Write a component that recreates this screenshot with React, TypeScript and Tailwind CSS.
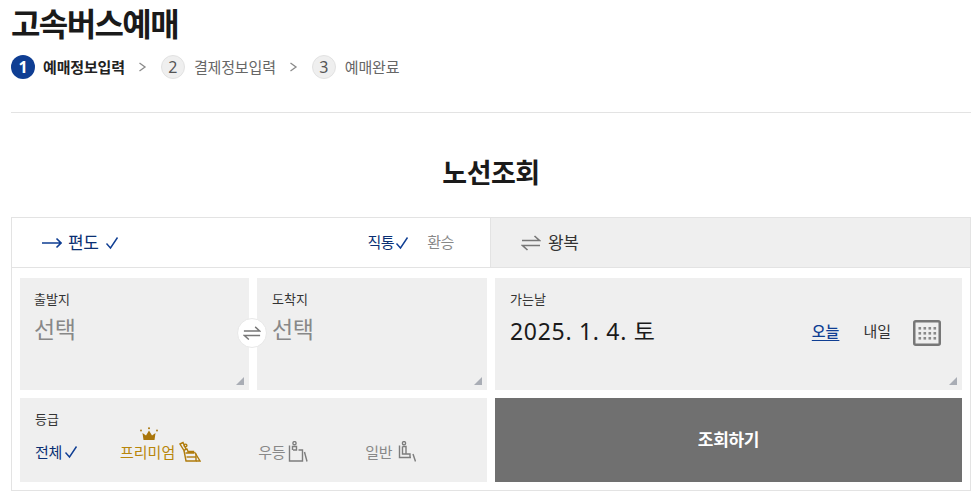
import React from "react";

const FONT = "font-['Noto_Sans','Noto_Sans_CJK_KR',sans-serif]";

function Corner() {
  return (
    <svg className="absolute bottom-[5px] right-[5px]" width="8" height="8" viewBox="0 0 8 8">
      <path d="M8 0V8H0Z" fill="#a9adb5" />
    </svg>
  );
}

function Check({ color = "#0f3e93", size = 14 }: { color?: string; size?: number }) {
  return (
    <svg width={size} height={size} viewBox="0 0 14 14" fill="none">
      <path d="M1.5 7.5L5.5 12L12.5 1.5" stroke={color} strokeWidth="1.4" />
    </svg>
  );
}

function Step({ n, label, active }: { n: number; label: string; active?: boolean }) {
  return (
    <div className="flex items-center">
      <span
        className={
          active
            ? "flex h-6 w-6 items-center justify-center rounded-full bg-[#0f3e93] text-base font-bold text-white"
            : "flex h-6 w-6 items-center justify-center rounded-full border border-[#e2e2e2] bg-[#efefef] text-base text-[#555]"
        }
      >
        {n}
      </span>
      <span
        className={
          active
            ? "ml-2 text-[15px] leading-6 font-bold tracking-[-0.15px] text-[#222]"
            : "ml-[9px] text-[15px] leading-6 tracking-[-0.15px] text-[#666]"
        }
      >
        {label}
      </span>
    </div>
  );
}

function Chevron() {
  return (
    <svg className="mx-[13.5px]" width="9" height="10" viewBox="0 0 9 10" fill="none">
      <path d="M1.5 1L7 5L1.5 9" stroke="#8a8a8a" strokeWidth="1.3" />
    </svg>
  );
}

function SwapArrows({ color = "#777", w = 20 }: { color?: string; w?: number }) {
  return (
    <svg width={w} height={(w * 16) / 20} viewBox="0 0 20 16" fill="none">
      <path d="M1 5.5H18.5L13.5 1" stroke={color} strokeWidth="1.6" />
      <path d="M19 10.5H1.5L6.5 15" stroke={color} strokeWidth="1.6" />
    </svg>
  );
}

function PremiumSeat() {
  return (
    <svg width="22" height="21" viewBox="0 0 22 21" fill="none" stroke="#b07c0c" strokeWidth="1.4">
      <path d="M1 3L4 1.5L7 8L5 9.5Z" />
      <circle cx="6.5" cy="4.5" r="1.4" />
      <path d="M6 8.5L8 8L9 10.5H14.5V12H6.5" />
      <path d="M5 9.5L7 20H17V12.5" />
      <path d="M7.5 16H17" />
      <path d="M15.5 11L21 20H17" />
    </svg>
  );
}

function NormalSeat() {
  return (
    <svg width="20" height="21" viewBox="0 0 20 21" fill="none" stroke="#7d7d7d" strokeWidth="1.4">
      <circle cx="6.5" cy="2.2" r="1.6" />
      <path d="M1.5 4.5V20H14.5V9H10.5" />
      <path d="M4.5 9V5.5H8.5V9H5" />
      <path d="M16.5 11L19 20.5" />
    </svg>
  );
}

function BasicSeat() {
  return (
    <svg width="18" height="21" viewBox="0 0 18 21" fill="none" stroke="#7d7d7d" strokeWidth="1.4">
      <circle cx="6" cy="2.2" r="1.6" />
      <path d="M1.5 4.5V16.5H13" />
      <path d="M4.5 5.5V13H12V16.5" />
      <path d="M4.5 5.5H8V13" />
      <path d="M15 13L17.5 20.5" />
    </svg>
  );
}

function CalendarIcon() {
  const dots = [0, 1, 2].flatMap((r) => [0, 1, 2, 3].map((c) => [c, r]));
  return (
    <svg width="28" height="26" viewBox="0 0 28 26" fill="none">
      <rect x="1.25" y="1.25" width="25.5" height="23.5" rx="1.5" stroke="#777" strokeWidth="2.5" />
      {dots.map(([c, r]) => (
        <rect key={`${c}-${r}`} x={5.5 + c * 5} y={7 + r * 5} width="2.6" height="2.6" fill="#8a8a8a" />
      ))}
    </svg>
  );
}

export default function App() {
  return (
    <div className={`w-[978px] bg-white pr-[7px] pl-[11px] ${FONT}`}>
      <h1 className="pt-[4px] text-[32px] leading-[40px] font-bold tracking-[-1.6px] text-[#1a1a1a]">
        고속버스예매
      </h1>

      <div className="mt-[11px] flex items-center">
        <Step n={1} label="예매정보입력" active />
        <Chevron />
        <Step n={2} label="결제정보입력" />
        <Chevron />
        <Step n={3} label="예매완료" />
      </div>

      <div className="mt-[33px] h-px bg-[#e3e3e3]" />

      <h2 className="mt-[42px] text-center text-[27px] leading-[36px] font-bold tracking-[-0.5px] text-[#1a1a1a]">
        노선조회
      </h2>

      <div className="mt-[26px] border border-[#e3e3e3]">
        <div className="flex h-[50px] border-b border-[#e3e3e3]">
          <div className="flex w-[478px] items-center pr-[36px] pl-[30px]">
            <svg width="20" height="12" viewBox="0 0 20 12" fill="none">
              <path d="M0 6H19M14.5 1.5L19 6L14.5 10.5" stroke="#0f3e93" strokeWidth="1.6" />
            </svg>
            <span className="ml-[6px] text-[17px] tracking-[-0.5px] text-[#0a2f73]">편도</span>
            <span className="ml-[7px]">
              <Check />
            </span>
            <span className="ml-auto text-[15px] tracking-[-0.4px] text-[#0a2f73]">직통</span>
            <span className="ml-[1px]">
              <Check />
            </span>
            <span className="ml-[18px] text-[15px] tracking-[-0.4px] text-[#888]">환승</span>
          </div>
          <div className="flex flex-1 items-center border-l border-[#e3e3e3] bg-[#efefef] pl-[30px]">
            <SwapArrows />
            <span className="ml-[7px] text-[17px] tracking-[-0.5px] text-[#333]">왕복</span>
          </div>
        </div>

        <div className="flex flex-col gap-2 px-2 pt-[10px] pb-2">
          <div className="flex h-[112px] gap-2">
            <div className="relative w-[229px] bg-[#efefef] px-[14px] pt-[12px]">
              <p className="text-[13px] leading-[18px] text-[#333]">출발지</p>
              <p className="mt-[6px] text-[23px] leading-[30px] tracking-[-0.5px] text-[#888]">선택</p>
              <Corner />
              <div className="absolute top-[40px] -right-[18px] z-10 flex h-[30px] w-[30px] items-center justify-center rounded-full border border-[#e8e8e8] bg-white">
                <SwapArrows w={18} />
              </div>
            </div>
            <div className="relative w-[230px] bg-[#efefef] px-[15px] pt-[12px]">
              <p className="text-[13px] leading-[18px] text-[#333]">도착지</p>
              <p className="mt-[6px] text-[23px] leading-[30px] tracking-[-0.5px] text-[#888]">선택</p>
              <Corner />
            </div>
            <div className="relative flex-1 bg-[#efefef] px-[15px] pt-[12px]">
              <p className="text-[13px] leading-[18px] text-[#333]">가는날</p>
              <div className="mt-[8px] flex items-center">
                <p className="text-[23px] leading-[30px] tracking-[0.7px] text-[#1a1a1a]">2025. 1. 4. 토</p>
                <span className="ml-auto text-[15px] leading-5 font-medium text-[#0f3e93] underline underline-offset-[3px]">
                  오늘
                </span>
                <span className="ml-[24px] text-[15px] leading-5 text-[#333]">내일</span>
                <span className="mr-[6px] ml-[22px] flex translate-y-[2px]">
                  <CalendarIcon />
                </span>
              </div>
              <Corner />
            </div>
          </div>

          <div className="flex h-[84px] gap-2">
            <div className="w-[467px] bg-[#efefef] px-[15px] pt-[12px]">
              <p className="text-[13px] leading-[18px] text-[#333]">등급</p>
              <div className="mt-[13px] flex items-center text-[15px] leading-5">
                <span className="tracking-[-0.3px] text-[#0a2f73]">전체</span>
                <span className="ml-[2px]">
                  <Check />
                </span>
                <div className="relative ml-[42px] flex items-center">
                  <svg
                    className="absolute -top-[14px] left-[20px]"
                    width="18"
                    height="14"
                    viewBox="0 0 18 14"
                    fill="#a9750a"
                  >
                    <path d="M3.5 13L2.5 6L6 8.5L9 3.5L12 8.5L15.5 6L14.5 13Z" />
                    <circle cx="9" cy="1.3" r="1" />
                    <circle cx="1" cy="3.5" r="0.9" />
                    <circle cx="17" cy="3.5" r="0.9" />
                  </svg>
                  <span className="text-[#b8860b]">프리미엄</span>
                  <span className="ml-[4px]">
                    <PremiumSeat />
                  </span>
                </div>
                <span className="ml-[57px] tracking-[-0.3px] text-[#888]">우등</span>
                <span className="ml-[3px]">
                  <NormalSeat />
                </span>
                <span className="ml-[57px] tracking-[-0.3px] text-[#888]">일반</span>
                <span className="ml-[6px]">
                  <BasicSeat />
                </span>
              </div>
            </div>
            <button className="flex-1 bg-[#707070] text-[17px] font-bold tracking-[-0.3px] text-white">
              조회하기
            </button>
          </div>
        </div>
      </div>
    </div>
  );
}
